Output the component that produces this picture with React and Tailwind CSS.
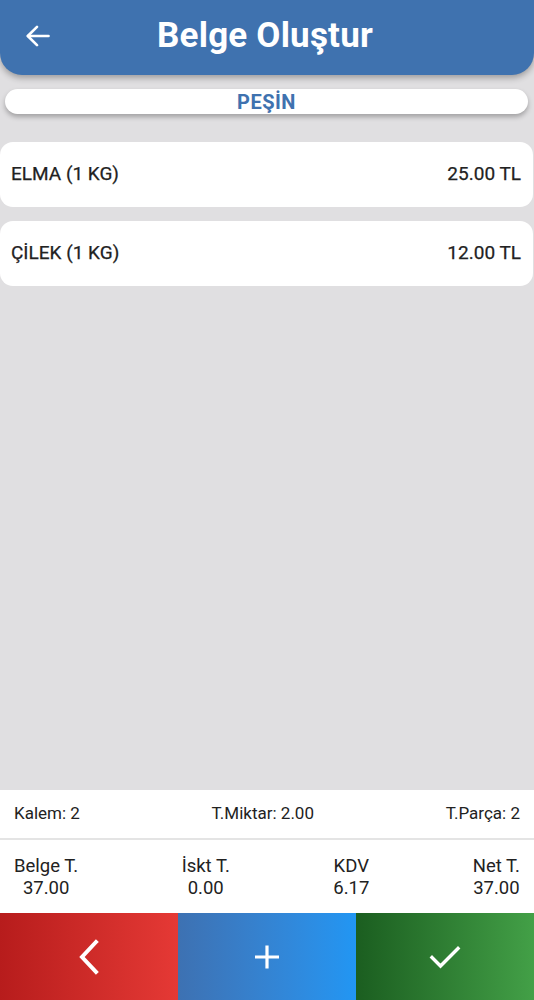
import React from "react";

export default function App() {
  const font = { fontFamily: "Roboto, 'Noto Sans', sans-serif" };
  return (
    <div className="w-[534px] h-[1000px] flex flex-col bg-[#e0dfe1] overflow-hidden" style={font}>
      <div className="h-[75px] shrink-0 bg-[#3f72af] rounded-b-[22px] shadow-[0_3px_6px_rgba(0,0,0,0.3)] flex items-center relative z-10 pb-[4px]">
        <div className="w-[76px] flex justify-center">
          <svg width="24" height="22" viewBox="0 0 24 22" fill="none" stroke="white" strokeWidth="2.6" strokeLinecap="round" strokeLinejoin="round">
            <path d="M22.5 11H2" />
            <path d="M11 1.8L1.8 11l9.2 9.2" />
          </svg>
        </div>
        <div className="flex-1 text-center text-white font-bold text-[35px] leading-none pr-[80px] tracking-[0.2px]">
          Belge Oluştur
        </div>
      </div>

      <div className="mt-[14px] ml-[5px] mr-[6px] h-[25px] bg-white rounded-full shadow-[0_3px_5px_rgba(0,0,0,0.28)] flex items-center justify-center">
        <span className="text-[#3f72af] font-bold text-[20px] tracking-[0.5px] leading-none">PEŞİN</span>
      </div>

      <div className="mt-[28px] flex flex-col gap-[14px] pr-[1px]">
        {[
          ["ELMA (1 KG)", "25.00 TL"],
          ["ÇİLEK (1 KG)", "12.00 TL"],
        ].map(([n, p]) => (
          <div key={n} className="h-[65px] bg-white rounded-[13px] flex items-center justify-between pl-[11px] pr-[12px] text-[#222] font-normal text-[19px] [-webkit-text-stroke:0.25px_#222]">
            <span>{n}</span>
            <span>{p}</span>
          </div>
        ))}
      </div>

      <div className="flex-1" />

      <div className="h-[48px] bg-white flex items-center justify-between px-[14px] text-[#222] text-[17px]">
        <span>Kalem: 2</span>
        <span>T.Miktar: 2.00</span>
        <span>T.Parça: 2</span>
      </div>
      <div className="h-[2px] bg-[#e4e4e4]" />
      <div className="h-[73px] bg-white flex items-center justify-between px-[14px] text-[#222] text-[18.5px] leading-[22px]">
        {[
          ["Belge T.", "37.00"],
          ["İskt T.", "0.00"],
          ["KDV", "6.17"],
          ["Net T.", "37.00"],
        ].map(([l, v]) => (
          <div key={l} className="flex flex-col items-center">
            <span>{l}</span>
            <span>{v}</span>
          </div>
        ))}
      </div>

      <div className="h-[87px] grid grid-cols-3">
        <div className="bg-gradient-to-r from-[#b71c1c] to-[#e53935] flex items-center justify-center">
          <svg width="24" height="36" viewBox="0 0 24 36" fill="none" stroke="white" strokeWidth="4" strokeLinecap="square">
            <path d="M19 3L5 18l14 15" />
          </svg>
        </div>
        <div className="bg-gradient-to-r from-[#3d71b2] to-[#2196f3] flex items-center justify-center">
          <svg width="26" height="26" viewBox="0 0 26 26" fill="none" stroke="white" strokeWidth="3.2">
            <path d="M13 1.5v23M1 13h24" />
          </svg>
        </div>
        <div className="bg-gradient-to-r from-[#1b5e20] to-[#43a047] flex items-center justify-center">
          <svg width="32" height="26" viewBox="0 0 32 26" fill="none" stroke="white" strokeWidth="3.4" strokeLinecap="square">
            <path d="M3 13.5l8.5 8.5L29 4.5" />
          </svg>
        </div>
      </div>
    </div>
  );
}
